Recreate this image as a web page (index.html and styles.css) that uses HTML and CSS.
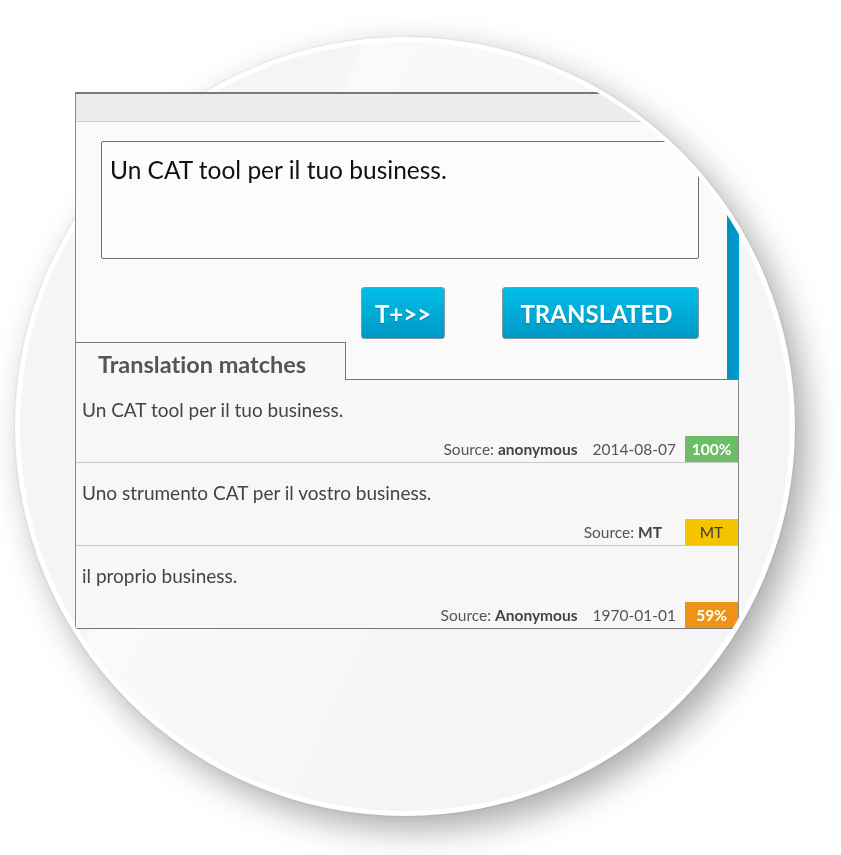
FILE: index.html
```html
<!DOCTYPE html>
<html lang="it">
<head>
<meta charset="utf-8">
<title>Translation matches</title>
<link rel="stylesheet" href="styles.css">
</head>
<body>
<div class="stage">
  <div class="disc">
    <div class="gloss"></div>
  </div>
  <div class="panel">
    <div class="titlebar"></div>
    <div class="editor">
      <div class="editor-main">
        <div class="source-box">Un CAT tool per il tuo business.</div>
        <div class="actions">
          <button class="btn btn-small">T+&gt;&gt;</button>
          <button class="btn btn-wide">TRANSLATED</button>
        </div>
        <div class="tab-row">
          <div class="tab">Translation matches</div>
          <div class="tab-fill"></div>
        </div>
      </div>
      <div class="blue-bar"></div>
    </div>
    <div class="matches">
      <div class="match">
        <div class="match-text">Un CAT tool per il tuo business.</div>
        <div class="meta">
          <span class="source">Source: <b>anonymous</b></span>
          <span class="date">2014-08-07</span>
          <span class="badge badge-green">100%</span>
        </div>
      </div>
      <div class="match">
        <div class="match-text">Uno strumento CAT per il vostro business.</div>
        <div class="meta">
          <span class="source">Source: <b>MT</b></span>
          <span class="badge badge-yellow">MT</span>
        </div>
      </div>
      <div class="match">
        <div class="match-text">il proprio business.</div>
        <div class="meta">
          <span class="source">Source: <b>Anonymous</b></span>
          <span class="date">1970-01-01</span>
          <span class="badge badge-orange">59%</span>
        </div>
      </div>
    </div>
  </div>
</div>
</body>
</html>
```
FILE: styles.css
```css
html, body {
  margin: 0;
  padding: 0;
  background: #ffffff;
}
body {
  width: 841px;
  height: 855px;
  overflow: hidden;
  font-family: Lato, "Open Sans", sans-serif;
  font-variant-ligatures: none;
}
.stage {
  display: grid;
  padding: 37px 0 0 15px;
  align-items: start;
  justify-items: start;
}
.disc, .panel {
  grid-area: 1 / 1;
}
.disc {
  position: relative;
  width: 780px;
  height: 779px;
  box-sizing: border-box;
  border-radius: 50%;
  border: 5px solid #ffffff;
  background: #f5f5f5;
  overflow: hidden;
  box-shadow: 11px 13px 34px rgba(0, 0, 0, 0.34), 0 0 3px rgba(0,0,0,0.10);
}
.gloss {
  position: absolute;
  inset: 0;
  background: linear-gradient(115deg, rgba(255,255,255,0) 0%, rgba(255,255,255,0) 30%, rgba(255,255,255,0.5) 31%, rgba(255,255,255,0.2) 55%, rgba(255,255,255,0) 56%);
  pointer-events: none;
}
.panel {
  margin: 55px 0 0 60px;
  width: 663px;
  border-left: 1px solid #8a8a8a;
  border-bottom-left-radius: 3px;
  -webkit-mask-image: radial-gradient(circle 385px at 330px 334px, #000 384.5px, transparent 385.5px), linear-gradient(to right, #000 330px, transparent 330px);
  mask-image: radial-gradient(circle 385px at 330px 334px, #000 384.5px, transparent 385.5px), linear-gradient(to right, #000 330px, transparent 330px);
  -webkit-mask-repeat: no-repeat;
  mask-repeat: no-repeat;
  -webkit-mask-size: 100% 100%;
  mask-size: 100% 100%;
}
.titlebar {
  height: 27px;
  background: #ececec;
  border-top: 2px solid #7a7a7a;
  border-bottom: 1px solid #cfcfcf;
}
.editor {
  display: flex;
  background: #fafafa;
}
.editor-main {
  flex: 1;
  display: flex;
  flex-direction: column;
}
.source-box {
  margin: 19px 0 0 25px;
  width: 598px;
  height: 118px;
  box-sizing: border-box;
  border: 1px solid #6f6f6f;
  border-radius: 2px;
  background: #fcfcfc;
  padding: 13px 8px;
  font-size: 24.5px;
  color: #111;
  line-height: 30px;
}
.actions {
  display: flex;
  margin: 28px 0 0 285px;
  gap: 57px;
}
.btn {
  height: 52px;
  box-sizing: border-box;
  border: 1px solid #7f98a4;
  border-radius: 3px;
  background: linear-gradient(#00bfea, #0098c5);
  color: #ffffff;
  font-family: Lato, "Open Sans", sans-serif;
  font-variant-ligatures: none;
  font-weight: 700;
  font-size: 24px;
  text-shadow: 0 1px 1px rgba(0, 60, 90, 0.35);
  padding: 0;
}
.btn-small { width: 84px; }
.btn-wide { width: 197px; padding-right: 8px; }
.tab-row {
  display: flex;
  margin-top: 3px;
  height: 38px;
}
.tab {
  width: 270px;
  box-sizing: border-box;
  border-top: 1px solid #777;
  border-right: 1px solid #777;
  background: #f8f8f8;
  padding-left: 22px;
  font-size: 23.5px;
  font-weight: 700;
  color: #555;
  line-height: 42px;
}
.tab-fill {
  flex: 1;
  border-bottom: 1px solid #777;
}
.blue-bar {
  width: 12px;
  background: linear-gradient(90deg, #0090bd, #009dcc);
  border-bottom: 1px solid #777;
}
.matches {
  background: #f7f7f7;
  border-right: 1px solid #8a8a8a;
  border-bottom: 1px solid #777;
}
.match {
  height: 83px;
  box-sizing: border-box;
  display: flex;
  flex-direction: column;
  justify-content: space-between;
  padding: 19px 0 0 6px;
  border-bottom: 1px solid #c9c9c9;
}
.match:last-child {
  border-bottom: none;
  height: 82px;
}
.match-text {
  font-size: 19px;
  color: #444;
  line-height: 22px;
}
.meta {
  display: flex;
  justify-content: flex-end;
  align-items: center;
  height: 26px;
  font-size: 15.5px;
  color: #555;
}
.source b { color: #444; }
.date {
  margin-left: 15px;
  color: #555;
}
.badge {
  margin-left: 9px;
  width: 53px;
  height: 26px;
  display: flex;
  align-items: center;
  justify-content: center;
  font-weight: 700;
  color: #ffffff;
}
.badge-green { background: #6cbd66; }
.badge-yellow { background: #f4c400; color: #3a3a3a; font-weight: 400; margin-left: 23px; }
.badge-orange { background: #ef9316; }
```
